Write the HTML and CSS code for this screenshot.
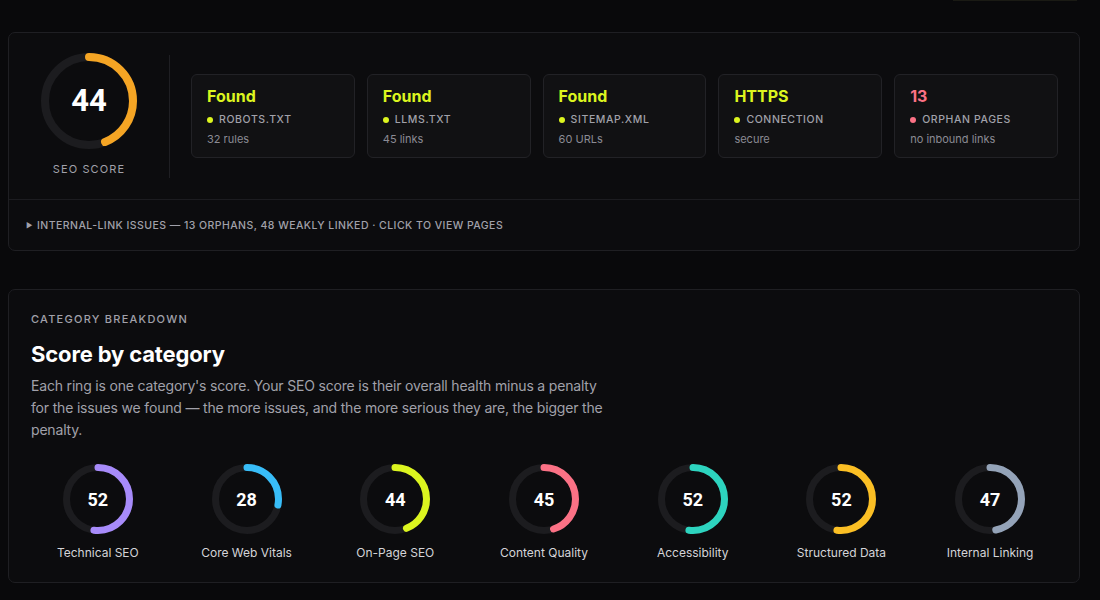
FILE: index.html
```html
<!DOCTYPE html>
<html lang="en">
<head>
<meta charset="utf-8">
<title>SEO Report</title>
<link rel="stylesheet" href="styles.css">
</head>
<body>
<div class="page">
  <div class="topbar"><div class="topbar-edge"></div></div>

  <section class="card overview">
    <div class="overview-main">
      <div class="score">
        <svg class="score-ring" width="96" height="96" viewBox="0 0 96 96">
          <circle cx="48" cy="48" r="44" fill="none" stroke="#1c1c1f" stroke-width="8"/>
          <circle cx="48" cy="48" r="44" fill="none" stroke="#f5a524" stroke-width="8" stroke-linecap="round" stroke-dasharray="121.6 276.5" transform="rotate(-90 48 48)"/>
        </svg>
        <div class="score-value">44</div>
        <div class="score-label">SEO SCORE</div>
      </div>
      <div class="divider"></div>
      <div class="stats">
        <div class="stat">
          <div class="stat-value ok">Found</div>
          <div class="stat-key"><span class="dot ok-bg"></span>ROBOTS.TXT</div>
          <div class="stat-note">32 rules</div>
        </div>
        <div class="stat">
          <div class="stat-value ok">Found</div>
          <div class="stat-key"><span class="dot ok-bg"></span>LLMS.TXT</div>
          <div class="stat-note">45 links</div>
        </div>
        <div class="stat">
          <div class="stat-value ok">Found</div>
          <div class="stat-key"><span class="dot ok-bg"></span>SITEMAP.XML</div>
          <div class="stat-note">60 URLs</div>
        </div>
        <div class="stat">
          <div class="stat-value ok">HTTPS</div>
          <div class="stat-key"><span class="dot ok-bg"></span>CONNECTION</div>
          <div class="stat-note">secure</div>
        </div>
        <div class="stat">
          <div class="stat-value bad">13</div>
          <div class="stat-key"><span class="dot bad-bg"></span>ORPHAN PAGES</div>
          <div class="stat-note">no inbound links</div>
        </div>
      </div>
    </div>
    <div class="overview-foot">
      <span class="caret">&#9654;</span>
      <span>INTERNAL-LINK ISSUES — 13 ORPHANS, 48 WEAKLY LINKED · CLICK TO VIEW PAGES</span>
    </div>
  </section>

  <section class="card breakdown">
    <div class="eyebrow">CATEGORY BREAKDOWN</div>
    <h2 class="title">Score by category</h2>
    <p class="desc">Each ring is one category's score. Your SEO score is their overall health minus a penalty for the issues we found — the more issues, and the more serious they are, the bigger the penalty.</p>
    <div class="rings">
      <div class="cat">
        <div class="cat-ring">
          <svg width="70" height="70" viewBox="0 0 70 70">
            <circle cx="35" cy="35" r="31.5" fill="none" stroke="#1c1c1f" stroke-width="7"/>
            <circle cx="35" cy="35" r="31.5" fill="none" stroke="#a78bfa" stroke-width="7" stroke-linecap="round" stroke-dasharray="102.9 198" transform="rotate(-90 35 35)"/>
          </svg>
          <span class="cat-value">52</span>
        </div>
        <div class="cat-label">Technical SEO</div>
      </div>
      <div class="cat">
        <div class="cat-ring">
          <svg width="70" height="70" viewBox="0 0 70 70">
            <circle cx="35" cy="35" r="31.5" fill="none" stroke="#1c1c1f" stroke-width="7"/>
            <circle cx="35" cy="35" r="31.5" fill="none" stroke="#38bdf8" stroke-width="7" stroke-linecap="round" stroke-dasharray="55.4 198" transform="rotate(-90 35 35)"/>
          </svg>
          <span class="cat-value">28</span>
        </div>
        <div class="cat-label">Core Web Vitals</div>
      </div>
      <div class="cat">
        <div class="cat-ring">
          <svg width="70" height="70" viewBox="0 0 70 70">
            <circle cx="35" cy="35" r="31.5" fill="none" stroke="#1c1c1f" stroke-width="7"/>
            <circle cx="35" cy="35" r="31.5" fill="none" stroke="#dcf51f" stroke-width="7" stroke-linecap="round" stroke-dasharray="87.1 198" transform="rotate(-90 35 35)"/>
          </svg>
          <span class="cat-value">44</span>
        </div>
        <div class="cat-label">On-Page SEO</div>
      </div>
      <div class="cat">
        <div class="cat-ring">
          <svg width="70" height="70" viewBox="0 0 70 70">
            <circle cx="35" cy="35" r="31.5" fill="none" stroke="#1c1c1f" stroke-width="7"/>
            <circle cx="35" cy="35" r="31.5" fill="none" stroke="#fb7185" stroke-width="7" stroke-linecap="round" stroke-dasharray="89.1 198" transform="rotate(-90 35 35)"/>
          </svg>
          <span class="cat-value">45</span>
        </div>
        <div class="cat-label">Content Quality</div>
      </div>
      <div class="cat">
        <div class="cat-ring">
          <svg width="70" height="70" viewBox="0 0 70 70">
            <circle cx="35" cy="35" r="31.5" fill="none" stroke="#1c1c1f" stroke-width="7"/>
            <circle cx="35" cy="35" r="31.5" fill="none" stroke="#2dd4bf" stroke-width="7" stroke-linecap="round" stroke-dasharray="102.9 198" transform="rotate(-90 35 35)"/>
          </svg>
          <span class="cat-value">52</span>
        </div>
        <div class="cat-label">Accessibility</div>
      </div>
      <div class="cat">
        <div class="cat-ring">
          <svg width="70" height="70" viewBox="0 0 70 70">
            <circle cx="35" cy="35" r="31.5" fill="none" stroke="#1c1c1f" stroke-width="7"/>
            <circle cx="35" cy="35" r="31.5" fill="none" stroke="#fbbf24" stroke-width="7" stroke-linecap="round" stroke-dasharray="102.9 198" transform="rotate(-90 35 35)"/>
          </svg>
          <span class="cat-value">52</span>
        </div>
        <div class="cat-label">Structured Data</div>
      </div>
      <div class="cat">
        <div class="cat-ring">
          <svg width="70" height="70" viewBox="0 0 70 70">
            <circle cx="35" cy="35" r="31.5" fill="none" stroke="#1c1c1f" stroke-width="7"/>
            <circle cx="35" cy="35" r="31.5" fill="none" stroke="#94a3b8" stroke-width="7" stroke-linecap="round" stroke-dasharray="93.0 198" transform="rotate(-90 35 35)"/>
          </svg>
          <span class="cat-value">47</span>
        </div>
        <div class="cat-label">Internal Linking</div>
      </div>
    </div>
  </section>
</div>
</body>
</html>
```

FILE: styles.css
```css
* { box-sizing: border-box; }

html, body {
  margin: 0;
  padding: 0;
  background: #09090b;
  color: #fafafa;
  font-family: Inter, "Noto Sans", sans-serif;
}

.page {
  width: 1072px;
  margin-left: 8px;
}

.topbar {
  height: 32px;
  display: flex;
  justify-content: flex-end;
}

.topbar-edge {
  width: 124px;
  height: 1px;
  margin-right: 3px;
  background: #1a1a14;
}

.card {
  background: #0c0c0e;
  border: 1px solid #1f1f23;
  border-radius: 7px;
}

/* Overview card */
.overview {
  height: 219px;
  display: flex;
  flex-direction: column;
}

.overview-main {
  display: flex;
  align-items: center;
  padding: 0 21px 0 32px;
  height: 167px;
  border-bottom: 1px solid #1c1c20;
}

.score {
  position: relative;
  width: 96px;
  display: flex;
  flex-direction: column;
  align-items: center;
  margin-top: -3px;
}

.score-ring { display: block; }

.score-value {
  position: absolute;
  top: 0;
  left: 0;
  width: 96px;
  height: 96px;
  display: flex;
  align-items: center;
  justify-content: center;
  font-family: Roboto, Inter, sans-serif;
  font-size: 31px;
  font-weight: 700;
  color: #ffffff;
}

.score-label {
  margin-top: 12px;
  font-size: 11px;
  line-height: 16px;
  letter-spacing: 1.1px;
  color: #a1a1aa;
  white-space: nowrap;
}

.divider {
  width: 1px;
  height: 123px;
  background: #1f1f23;
  margin: 0 21px 0 32px;
}

.stats {
  flex: 1;
  display: flex;
  gap: 12px;
  margin-top: -1px;
}

.stat {
  flex: 1;
  height: 84px;
  background: #111113;
  border: 1px solid #222226;
  border-radius: 6px;
  padding: 11px 15px 0;
}

.stat-value {
  font-size: 16px;
  line-height: 20px;
  font-weight: 700;
}

.ok { color: #dcf51f; }
.bad { color: #fb7185; }
.ok-bg { background: #dcf51f; }
.bad-bg { background: #fb7185; }

.stat-key {
  margin-top: 6px;
  display: flex;
  align-items: center;
  gap: 6px;
  font-size: 10.5px;
  line-height: 16px;
  letter-spacing: 0.6px;
  color: #a1a1aa;
  font-weight: 500;
}

.dot {
  width: 6px;
  height: 6px;
  border-radius: 50%;
  flex: none;
}

.stat-note {
  margin-top: 3px;
  font-size: 11px;
  line-height: 16px;
  color: #8b8b94;
}

.overview-foot {
  flex: 1;
  display: flex;
  align-items: center;
  gap: 4px;
  padding: 0 17px;
  font-size: 10.5px;
  letter-spacing: 0.45px;
  font-weight: 500;
  color: #a1a1aa;
}

.caret {
  font-size: 7px;
  color: #a1a1aa;
}

/* Breakdown card */
.breakdown {
  margin-top: 38px;
  height: 294px;
  padding: 21px 22px 0;
}

.eyebrow {
  font-size: 11px;
  line-height: 16px;
  letter-spacing: 1.25px;
  color: #a1a1aa;
  font-weight: 500;
}

.title {
  margin: 13px 0 0;
  font-size: 22px;
  line-height: 28px;
  font-weight: 700;
  letter-spacing: -0.15px;
  color: #ffffff;
}

.desc {
  margin: 7px 0 0;
  max-width: 580px;
  font-size: 14px;
  line-height: 22px;
  letter-spacing: -0.18px;
  color: #a1a1aa;
}

.rings {
  margin-top: 23px;
  display: grid;
  grid-template-columns: repeat(7, 1fr);
  column-gap: 15px;
}

.cat {
  display: flex;
  flex-direction: column;
  align-items: center;
}

.cat-ring {
  position: relative;
  width: 70px;
  height: 70px;
}

.cat-ring svg { display: block; }

.cat-value {
  position: absolute;
  inset: 0;
  display: flex;
  align-items: center;
  justify-content: center;
  font-family: Roboto, Inter, sans-serif;
  font-size: 18px;
  font-weight: 700;
  color: #ffffff;
}

.cat-label {
  margin-top: 11px;
  font-size: 12px;
  line-height: 16px;
  color: #d4d4d8;
}
```
